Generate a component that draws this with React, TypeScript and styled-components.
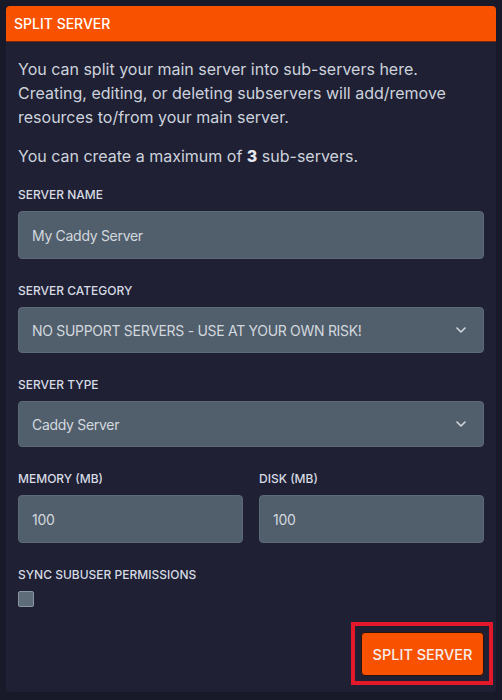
import React from "react";
import styled, { createGlobalStyle } from "styled-components";

const GlobalStyle = createGlobalStyle`
  html, body { margin: 0; padding: 0; background: #191a29; }
  body { font-family: Inter, "Liberation Sans", sans-serif; }
  * { box-sizing: border-box; }
`;

const Page = styled.div`
  padding: 6px;
  min-height: 700px;
  background: #191a29;
`;

const Card = styled.section`
  background: #1f2034;
  border-radius: 4px;
  overflow: hidden;
`;

const Header = styled.header`
  height: 36px;
  display: flex;
  align-items: center;
  padding: 0 8px;
  background: #f85200;
  border-bottom: 1px solid #7a2a08;
  color: #ffffff;
  font-size: 14px;
  font-weight: 500;
`;

const Body = styled.div`
  display: flex;
  flex-direction: column;
  padding: 15px 12px 17px;
`;

const Text = styled.p<{ $gap?: number }>`
  margin: ${(p) => p.$gap ?? 0}px 0 0;
  font-size: 16px;
  line-height: 24px;
  color: #cdd3dc;
  strong { font-weight: 800; color: #e6eaf0; }
`;

const Fields = styled.div`
  display: flex;
  flex-direction: column;
  gap: 24px;
  margin-top: 19px;
`;

const Row = styled.div`
  display: grid;
  grid-template-columns: 1fr 1fr;
  gap: 16px;
`;

const Field = styled.div`
  display: flex;
  flex-direction: column;
  gap: 8px;
`;

const Label = styled.label`
  font-size: 12px;
  line-height: 16px;
  font-weight: 500;
  text-transform: uppercase;
  color: #d6dbe3;
`;

const Input = styled.input`
  height: 48px;
  width: 100%;
  padding: 0 13px;
  background: #515f6c;
  border: 1px solid #5c6976;
  border-radius: 4px;
  color: #d3d8df;
  font-family: inherit;
  font-size: 14px;
  letter-spacing: -0.3px;
  outline: none;
`;

const Select = styled.div`
  height: 46px;
  display: flex;
  align-items: center;
  justify-content: space-between;
  padding: 0 17px 0 13px;
  background: #515f6c;
  border: 1px solid #5c6976;
  border-radius: 4px;
  color: #d3d8df;
  font-size: 14px;
  letter-spacing: -0.3px;
`;

const Chevron = () => (
  <svg width="10" height="6" viewBox="0 0 10 6" fill="none">
    <path d="M1 1l4 4 4-4" stroke="#d3d8df" strokeWidth="1.6" strokeLinecap="round" strokeLinejoin="round" />
  </svg>
);

const Checkbox = styled.span`
  display: block;
  width: 16px;
  height: 16px;
  background: #5e6b78;
  border: 1px solid #8a96a3;
  border-radius: 2px;
`;

const Actions = styled.div`
  display: flex;
  justify-content: flex-end;
  margin-top: 25px;
`;

const Highlight = styled.div`
  display: flex;
  margin: -10px -9px -10px 0;
  padding: 6px 5px 5px 6px;
  border: 4px solid #e3192b;
`;

const Button = styled.button`
  height: 44px;
  width: 123px;
  padding: 0;
  background: #f85200;
  border: 1px solid #2a1208;
  border-radius: 4px;
  color: #f6ecec;
  font-family: inherit;
  font-size: 14.5px;
  font-weight: 500;
`;

export default function App() {
  return (
    <>
      <GlobalStyle />
      <Page>
        <Card>
          <Header>SPLIT SERVER</Header>
          <Body>
            <Text>
              You can split your main server into sub-servers here. Creating, editing, or deleting subservers will add/remove resources to/from your main server.
            </Text>
            <Text $gap={15}>
              You can create a maximum of <strong>3</strong> sub-servers.
            </Text>
            <Fields>
              <Field>
                <Label>Server Name</Label>
                <Input defaultValue="My Caddy Server" />
              </Field>
              <Field>
                <Label>Server Category</Label>
                <Select>
                  <span>NO SUPPORT SERVERS - USE AT YOUR OWN RISK!</span>
                  <Chevron />
                </Select>
              </Field>
              <Field>
                <Label>Server Type</Label>
                <Select>
                  <span>Caddy Server</span>
                  <Chevron />
                </Select>
              </Field>
              <Row>
                <Field>
                  <Label>Memory (MB)</Label>
                  <Input defaultValue="100" />
                </Field>
                <Field>
                  <Label>Disk (MB)</Label>
                  <Input defaultValue="100" />
                </Field>
              </Row>
              <Field>
                <Label>Sync Subuser Permissions</Label>
                <Checkbox />
              </Field>
            </Fields>
            <Actions>
              <Highlight>
                <Button>SPLIT SERVER</Button>
              </Highlight>
            </Actions>
          </Body>
        </Card>
      </Page>
    </>
  );
}
